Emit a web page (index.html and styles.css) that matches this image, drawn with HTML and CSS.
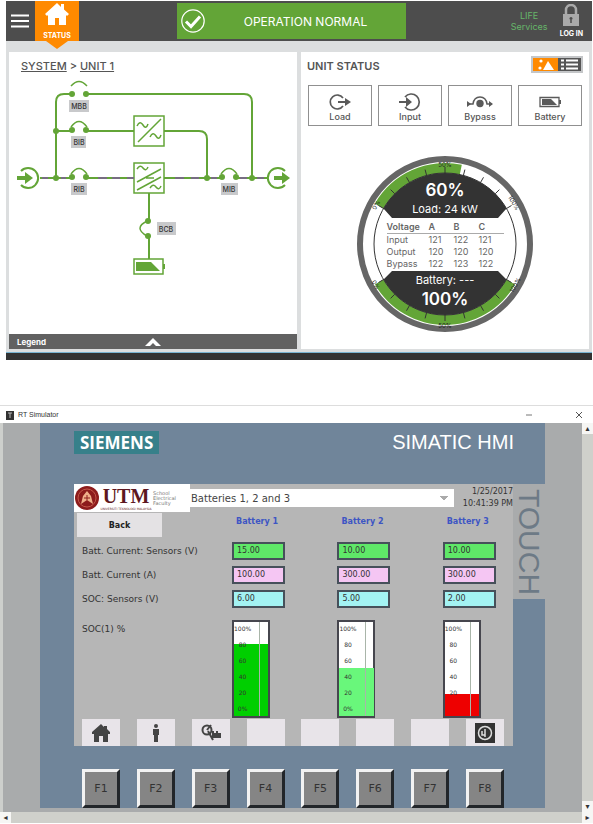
FILE: index.html
```html
<!DOCTYPE html>
<html lang="en">
<head>
  <meta charset="UTF-8">
  <meta name="viewport" content="width=device-width, initial-scale=1.0">
  <title>Unit Status</title>
  <link rel="stylesheet" href="styles.css">
</head>
<body>
  <!-- UPS display -->
  <section class="ups">
    <header class="topbar">
      <button class="menu-btn" aria-label="Menu">
        <svg width="18" height="14" viewBox="0 0 18 14"><path d="M0 1.500h18M0 7h18M0 12.500h18" stroke="#fff" stroke-width="2"/></svg>
      </button>
      <button class="status-btn">
        <svg width="24" height="22" viewBox="0 0 24 22"><path d="M12 0 0 11l2 2 1-1v10h7v-7h4v7h7V12l1 1 2-2-5-4.500V1h-3v3z" fill="#fff"/></svg>
        <span>STATUS</span>
      </button>
      <div class="banner">
        <svg width="24" height="24" viewBox="0 0 24 24"><circle cx="12" cy="12" r="11.200" fill="none" stroke="#fff" stroke-width="1.200"/><path d="M5 12.500l5 5 9-10" fill="none" stroke="#fff" stroke-width="3"/></svg>
        <span>OPERATION NORMAL</span>
      </div>
      <div class="life">LIFE<br>Services</div>
      <button class="login-btn">
        <svg width="18" height="22" viewBox="0 0 18 22"><path d="M4 11V6a5 5 0 0 1 10 0v5" fill="none" stroke="#aaa" stroke-width="2.500"/><rect x="1" y="10" width="16" height="12" fill="#aaa"/><path d="M9 13v6M7.500 14.500h3" stroke="#4d4d4d" stroke-width="1.500"/></svg>
        <span>LOG IN</span>
      </button>
    </header>

    <main class="panels">
      <div class="card">
        <nav class="crumbs"><a href="#">SYSTEM</a> &gt; <a href="#">UNIT 1</a></nav>
        <svg class="diagram" viewBox="9 75 288 259">
          <g fill="none" stroke="#63a537" stroke-width="2">
            <path d="M56 178V102q0-8 8-8h8M86 94h158q8 0 8 8v76"/>
            <path d="M56 131h16M86 131h48M164 131h35q8 0 8 8v39"/>
            <path d="M40 178h32M86 178h48M164 178h58M236 178h31"/>
            <path d="M149 193v28M149 236v23"/>
            <g stroke-width="1.500">
              <path d="M71 86q8-9 16 0M71 127q8-11 16 0M71 174q8-11 16 0M221 174q8-11 16 0M147 221q-14 7 0 15"/>
              <rect x="134" y="116" width="30" height="30"/>
              <rect x="134" y="163" width="30" height="30"/>
              <path d="M138 142l23-23M137 182l24-13M137 190l24-13M146 178h8"/>
              <path d="M137 126q3-6 6-1t5-1M150 137q3-6 6-1t5-1M137 169q3-5 6-1t5-1M150 188q3-5 6-1t5-1"/>
            </g>
            <path d="M21 171a10 10 0 1 1 0 14M285 171a10 10 0 1 0 0 14"/>
            <rect x="134" y="259" width="29" height="15" stroke-width="1.500"/>
          </g>
          <path d="M98 178h9M112 178h8M127 178h7M175 178h9M191 178h8M42 178h6M61 178h5M211 178h6M240 178h7M257 178h7" stroke="#776d82" stroke-width="1.800"/>
          <g fill="#63a537">
            <path d="M17 176h8v-4l8 6-8 6v-4h-8zM274 176h8v-4l8 6-8 6v-4h-8z"/>
            <path d="M136 262h15l9 9h-24zM163 264h2v5h-2z"/>
            <circle cx="72" cy="94" r="3"/><circle cx="86" cy="94" r="3"/>
            <circle cx="56" cy="131" r="3"/><circle cx="72" cy="130" r="3"/><circle cx="86" cy="130" r="3"/>
            <circle cx="56" cy="178" r="3"/><circle cx="72" cy="177" r="3"/><circle cx="86" cy="177" r="3"/>
            <circle cx="207" cy="178" r="3"/><circle cx="222" cy="177" r="3"/><circle cx="236" cy="177" r="3"/>
            <circle cx="252" cy="178" r="3"/><circle cx="148" cy="221" r="3"/><circle cx="148" cy="236" r="3"/>
          </g>
          <g fill="#c8c9cb">
            <rect x="69" y="100" width="20" height="12"/><rect x="71" y="136" width="15" height="12"/>
            <rect x="71" y="183" width="16" height="12"/><rect x="221" y="183" width="17" height="12"/>
            <rect x="157" y="222" width="19" height="13"/>
          </g>
          <g class="tags">
            <text x="79" y="109">MBB</text><text x="79" y="145">BIB</text><text x="79" y="192">RIB</text>
            <text x="229" y="192">MIB</text><text x="166" y="232">BCB</text>
          </g>
        </svg>
        <button class="legend">
          <span>Legend</span>
          <svg width="16" height="8" viewBox="0 0 16 8"><path d="M0 8 8 0l8 8h-5L8 5 5 8z" fill="#fff"/></svg>
        </button>
      </div>

      <div class="card">
        <div class="card-head">
          <h2>UNIT STATUS</h2>
          <button class="view-toggle" aria-label="Change view">
            <svg width="48" height="13" viewBox="0 0 48 13"><path fill="#ff8a00" d="M0 0h25v13H0z"/><path fill="#555" d="M25 0h23v13H25z"/><path d="M10 12l5-9 6 9z" fill="#fff"/><circle cx="8" cy="3" r="1.600" fill="#fff"/><circle cx="7" cy="10" r="1.600" fill="#fff"/><path d="M28 2.500h3M33 2.500h12M28 6.500h3M33 6.500h12M28 10.500h3M33 10.500h12" stroke="#fff" stroke-width="2"/></svg>
          </button>
        </div>
        <div class="tiles">
          <button class="tile">
            <svg width="24" height="18" viewBox="0 0 24 18"><path d="M15 5a7 7 0 1 0 0 8" fill="none" stroke="#5a5a5a" stroke-width="1.700"/><path d="M10 8h7V5l6 4-6 4v-3h-7z" fill="#5a5a5a"/></svg>
            <span>Load</span>
          </button>
          <button class="tile">
            <svg width="24" height="18" viewBox="0 0 24 18"><path d="M7 4a8 8 0 1 1 0 10" fill="none" stroke="#5a5a5a" stroke-width="1.700"/><path d="M1 8h7V4l6 5-6 5v-4H1z" fill="#5a5a5a"/></svg>
            <span>Input</span>
          </button>
          <button class="tile">
            <svg width="28" height="18" viewBox="0 0 28 18"><path d="M2 11h5q1-7 7-7t7 7h5" fill="none" stroke="#5a5a5a" stroke-width="1.500"/><circle cx="14" cy="10.500" r="3.700" fill="#5a5a5a"/><path d="M1 8l4 3-4 3zM23 8l4 3-4 3z" fill="#5a5a5a"/></svg>
            <span>Bypass</span>
          </button>
          <button class="tile">
            <svg width="24" height="18" viewBox="0 0 24 18"><path d="M2 4.500h19v9H2z" fill="none" stroke="#5a5a5a" stroke-width="1.300"/><path d="M4 6h9l6 6H4z" fill="#5a5a5a"/><path d="M21 7h2v4h-2z" fill="#5a5a5a"/></svg>
            <span>Battery</span>
          </button>
        </div>

        <div class="gauge">
          <svg class="dial" viewBox="-88 -88 176 176">
            <circle r="85" fill="#fff" stroke="#666" stroke-width="6"/>
            <path d="M-70.100-40.500A81 81 0 0 1 16.800-79.200L14.800-69.400A71 71 0 0 0-61.500-35.500z" fill="#63a537"/>
            <path d="M-70.100 40.500A81 81 0 0 0 70.100 40.500L61.500 35.500A71 71 0 0 1-61.500 35.500z" fill="#63a537"/>
            <circle r="71" fill="none" stroke="#333"/>
            <path d="M-61.500-35.500A71 71 0 0 1 61.500-35.500L53-26H-53zM-61.500 35.500A71 71 0 0 0 61.500 35.500L53 27H-53z" fill="#333"/>
            <g stroke="#333" stroke-width="1">
              <path d="M0-71v-6M18.400-68.600l1.500-5.800M35.500-61.500l3-5.200M50.200-50.200l4.200-4.200M-18.400-68.600l-1.500-5.800M-35.500-61.500l-3-5.200M-50.200-50.200l-4.200-4.200M61.500-35.500l5-3M-61.500-35.500l-5-3"/>
              <path d="M0 71v6M18.400 68.600l1.500 5.800M35.500 61.500l3 5.200M50.200 50.200l4.200 4.200M-18.400 68.600l-1.500 5.800M-35.500 61.500l-3 5.200M-50.200 50.200l-4.200 4.200M61.500 35.500l5 3M-61.500 35.500l-5 3"/>
            </g>
            <g class="ticks">
              <text y="-77">50%</text><text y="84">50%</text>
              <text transform="translate(-67 -38) rotate(-60)">0%</text>
              <text transform="translate(67 -40) rotate(60)">100%</text>
              <text transform="translate(-71 42) rotate(60)">0%</text>
              <text transform="translate(72 42) rotate(-60)">100%</text>
            </g>
          </svg>
          <div class="readout">
            <strong>60%</strong>
            <span>Load: 24 kW</span>
            <table class="volts">
              <thead><tr><th>Voltage</th><th>A</th><th>B</th><th>C</th></tr></thead>
              <tbody>
                <tr><td>Input</td><td>121</td><td>122</td><td>121</td></tr>
                <tr><td>Output</td><td>120</td><td>120</td><td>120</td></tr>
                <tr><td>Bypass</td><td>122</td><td>123</td><td>122</td></tr>
              </tbody>
            </table>
            <span>Battery: ---</span>
            <strong>100%</strong>
          </div>
        </div>
      </div>
    </main>
  </section>

  <!-- Simulator window -->
  <section class="window">
    <header class="titlebar">
      <svg width="8" height="10" viewBox="0 0 8 10"><path d="M0 1h8v9H0z" fill="#333"/><path d="M2 3h4M4 3v5" stroke="#bbb"/></svg>
      <h1>RT Simulator</h1>
      <button aria-label="Minimize"><svg width="8" height="8" viewBox="0 0 8 8"><path d="M1 4h6" stroke="#777"/></svg></button>
      <button aria-label="Close"><svg width="8" height="8" viewBox="0 0 8 8"><path d="M1 1l6 6M7 1 1 7" stroke="#555"/></svg></button>
    </header>
    <div class="viewport">
      <div class="bezel">
        <div class="brand">
          <span class="siemens">SIEMENS</span>
          <span class="simatic">SIMATIC HMI</span>
        </div>
        <div class="middle">
          <div class="screen">
            <div class="screen-head">
              <div class="logo">
                <svg width="24" height="24" viewBox="0 0 24 24"><circle cx="12" cy="12" r="12" fill="#8d1c1c"/><circle cx="12" cy="12" r="9" fill="none" stroke="#c4574a"/><path d="M6 18l2-8 4-5 4 5 2 8-6-4z" fill="#f0b08a"/><path d="M9 12h6M12 9v5" stroke="#8d1c1c"/></svg>
                <div class="utm"><b>UTM</b><small>UNIVERSITI TEKNOLOGI MALAYSIA</small></div>
                <div class="faculty">School<br>Electrical<br>Faculty</div>
              </div>
              <select class="page-select" aria-label="Page"><option>Batteries 1, 2 and 3</option></select>
              <div class="clock">1/25/2017<br>10:41:39 PM</div>
            </div>
            <table class="readings">
              <thead>
                <tr><th><button class="back">Back</button></th><th>Battery 1</th><th>Battery 2</th><th>Battery 3</th></tr>
              </thead>
              <tbody>
                <tr><th>Batt. Current: Sensors (V)</th><td><output class="green">15.00</output></td><td><output class="green">10.00</output></td><td><output class="green">10.00</output></td></tr>
                <tr><th>Batt. Current (A)</th><td><output class="pink">100.00</output></td><td><output class="pink">300.00</output></td><td><output class="pink">300.00</output></td></tr>
                <tr><th>SOC: Sensors (V)</th><td><output class="cyan">6.00</output></td><td><output class="cyan">5.00</output></td><td><output class="cyan">2.00</output></td></tr>
                <tr class="soc">
                  <th>SOC(1) %</th>
                  <td><div class="tank"><div class="level full" style="height: 77%"></div><ol><li>100%</li><li>80</li><li>60</li><li>40</li><li>20</li><li>0%</li></ol></div></td>
                  <td><div class="tank"><div class="level half" style="height: 51%"></div><ol><li>100%</li><li>80</li><li>60</li><li>40</li><li>20</li><li>0%</li></ol></div></td>
                  <td><div class="tank"><div class="level low" style="height: 23%"></div><ol><li>100%</li><li>80</li><li>60</li><li>40</li><li>20</li><li></li></ol></div></td>
                </tr>
              </tbody>
            </table>
            <div class="softkeys">
              <button aria-label="Home"><svg width="20" height="20" viewBox="0 0 20 20"><path d="M10 1 1 9v2h2v8h5v-6h4v6h5v-8h2V9l-3-3V3h-3v1z" fill="#444"/></svg></button>
              <button aria-label="User"><svg width="20" height="20" viewBox="0 0 20 20"><circle cx="10" cy="3" r="2" fill="#444"/><path d="M7 6h6v6h-1v7H8v-7H7z" fill="#444"/></svg></button>
              <button aria-label="Settings"><svg width="20" height="20" viewBox="0 0 20 20"><circle cx="6" cy="7" r="4.500" fill="none" stroke="#444" stroke-width="2"/><path d="M6 7l4-5M7 8l5 9" stroke="#444" stroke-width="2"/><path d="M11 8h2v2h2V8h2v2h3v5h-9z" fill="#444"/></svg></button>
              <button aria-label="Key 4"></button>
              <button aria-label="Key 5"></button>
              <button aria-label="Key 6"></button>
              <button aria-label="Key 7"></button>
              <button aria-label="Power"><svg width="20" height="20" viewBox="0 0 20 20"><path d="M0 0h20v20H0z" fill="#333"/><circle cx="10" cy="10" r="6.500" fill="none" stroke="#ddd" stroke-width="1.500"/><path d="M10 6v8M7 8v4h3" fill="none" stroke="#ddd" stroke-width="1.500"/></svg></button>
            </div>
          </div>
          <div class="touch">TOUCH</div>
        </div>
        <div class="fkeys">
          <button>F1</button><button>F2</button><button>F3</button><button>F4</button>
          <button>F5</button><button>F6</button><button>F7</button><button>F8</button>
        </div>
      </div>
      <div class="vscroll"><span>▴</span><span>▾</span></div>
    </div>
    <div class="hscroll"><span>◂</span><span>▸</span></div>
  </section>
</body>
</html>
```
FILE: styles.css
```css
* {
  box-sizing: border-box;
}
body {
  margin: 0;
  background: #fff;
  font-family: Inter, "Liberation Sans", sans-serif;
  color: #555;
}
button {
  font: inherit;
  color: inherit;
  border: 0;
  padding: 0;
  background: none;
}
svg {
  display: block;
}

/* UPS display */
.ups {
  margin: 1px 1px 0 6px;
  background: #dcdedf;
  border-bottom: 7px solid #333;
}
.topbar {
  display: flex;
  height: 40px;
  background: #4d4d4d;
  color: #fff;
}
.menu-btn {
  padding: 0 6px 0 5px;
}
.status-btn {
  width: 44px;
  height: 48px;
  padding: 2px 0 9px;
  background: #ff8a00;
  clip-path: polygon(0 0, 100% 0, 100% 40px, 75% 40px, 50% 100%, 25% 40px, 0 40px);
  font-size: 7px;
  font-weight: bold;
  display: flex;
  flex-direction: column;
  align-items: center;
  justify-content: space-between;
}
.banner {
  display: flex;
  flex: 0 1 229px;
  align-items: center;
  margin: 2px 0 2px 98px;
  padding-left: 4px;
  background: #63a537;
  font-size: 12px;
}
.banner span {
  flex: 1;
  text-align: center;
}
.life {
  margin-left: auto;
  padding-top: 9px;
  font-size: 9px;
  line-height: 11px;
  text-align: center;
  color: #66b56a;
}
.login-btn {
  display: flex;
  flex-direction: column;
  align-items: center;
  justify-content: space-between;
  margin: 3px 9px 3px 12px;
  font-size: 7px;
  font-weight: bold;
}
.panels {
  display: grid;
  grid-template-columns: 1fr 1fr;
  gap: 4px;
  padding: 11px 3px 3px;
  border-bottom: 1px solid #79b4d2;
}
.card {
  display: flex;
  flex-direction: column;
  background: #fff;
}
.crumbs {
  padding: 6px 12px 0;
  height: 23px;
  font-size: 11px;
  line-height: 16px;
  font-weight: 500;
}
.crumbs a {
  color: inherit;
}
.diagram {
  width: 100%;
  flex: 1;
}
.tags {
  font-size: 7px;
  font-weight: 500;
  text-anchor: middle;
  fill: #333;
}
.legend {
  display: grid;
  grid-template-columns: 1fr auto 1fr;
  align-items: center;
  height: 15px;
  padding: 0 8px;
  background: #616161;
  color: #fff;
  font-size: 8px;
  font-weight: bold;
  text-align: left;
}
.card-head {
  display: flex;
  justify-content: space-between;
  padding: 4px 6px 0;
}
.card-head h2 {
  margin: 0;
  font-size: 11px;
  line-height: 20px;
  font-weight: 600;
}
.view-toggle {
  height: 17px;
  border: 2px solid #c4c6c8;
}
.tiles {
  display: grid;
  grid-template-columns: repeat(4, 1fr);
  gap: 6px;
  padding: 9px 7px 0;
}
.tile {
  display: flex;
  flex-direction: column;
  align-items: center;
  height: 41px;
  padding-top: 7px;
  border: 1px solid #909090;
  font-size: 9px;
  line-height: 11px;
  font-weight: 500;
}
.gauge {
  display: grid;
  justify-content: center;
  margin-top: 30px;
  padding-bottom: 17px;
}
.dial,
.readout {
  grid-area: 1 / 1;
  width: 176px;
  height: 176px;
}
.ticks {
  font-size: 6px;
  text-anchor: middle;
  fill: #222;
}
.readout {
  display: flex;
  flex-direction: column;
  align-items: center;
  z-index: 1;
  padding-top: 24px;
  color: #fff;
  font-size: 11px;
}
.readout strong {
  font-size: 17px;
  line-height: 20px;
  font-weight: 600;
}
.readout span {
  line-height: 18px;
}
.volts {
  border-collapse: collapse;
  table-layout: fixed;
  width: 112px;
  margin: 3px 0 1px;
  color: #666;
  font-size: 9px;
  line-height: 12px;
  text-align: left;
}
.volts th,
.volts td {
  padding: 0;
  width: 25px;
}
.volts th:first-child {
  width: 42px;
}
.volts th {
  border-bottom: 1px solid #aaa;
  font-weight: 600;
}

/* Simulator window */
.window {
  margin-top: 45px;
  border-top: 1px solid #ddd;
  font-family: "DejaVu Sans", sans-serif;
  color: #333;
}
.titlebar {
  display: flex;
  align-items: center;
  gap: 4px;
  height: 17px;
  padding: 0 10px 0 6px;
  background: #fff;
}
.titlebar h1 {
  flex: 1;
  margin: 0;
  font: 7px "Liberation Sans", sans-serif;
}
.titlebar button + button {
  margin-left: 38px;
}
.viewport {
  display: flex;
  border-left: 3px solid #cdcfcc;
  background: #a9abac;
}
.bezel {
  flex: 1;
  min-width: 0;
  margin: 0 37px 4px;
  padding-left: 34px;
  background: #70859a;
}
.brand {
  display: flex;
  justify-content: space-between;
  padding: 8px 31px 30px 0;
  color: #fff;
  font-family: "Liberation Sans", sans-serif;
}
.siemens {
  padding: 0 6px;
  background: #37808a;
  font: bold 17px/23px "Open Sans", sans-serif;
}
.simatic {
  font-size: 20px;
  line-height: 23px;
}
.middle {
  display: flex;
  align-items: flex-start;
}
.screen {
  flex: 1;
  min-width: 0;
  background: #b6b6b6;
}
.screen-head {
  display: flex;
  align-items: flex-start;
  height: 28px;
}
.logo {
  display: flex;
  align-items: center;
  gap: 2px;
  flex: 0 0 116px;
  height: 28px;
  padding-left: 1px;
  background: #fff;
}
.utm {
  display: flex;
  flex-direction: column;
  align-items: center;
  width: 50px;
  color: #5d1720;
}
.utm b {
  font: bold 20px/22px "Liberation Serif", serif;
}
.utm small {
  font-size: 3px;
  line-height: 4px;
  white-space: nowrap;
}
.faculty {
  font-size: 5px;
  line-height: 5px;
  color: #777;
}
.page-select {
  flex: 1;
  min-width: 0;
  height: 18px;
  margin-top: 5px;
  padding: 0 16px 0 1px;
  border: 0;
  border-radius: 0;
  appearance: none;
  background-color: #fff;
  background-image: linear-gradient(45deg, transparent 50%, #aaa 50%), linear-gradient(-45deg, transparent 50%, #aaa 50%);
  background-position: right 10px center, right 6px center;
  background-repeat: no-repeat;
  background-size: 4px 4px;
  color: #444;
  font: 10px "DejaVu Sans", sans-serif;
}
.clock {
  width: 59px;
  padding-top: 2px;
  font-size: 8px;
  line-height: 12px;
  text-align: right;
  white-space: nowrap;
}
.readings {
  width: 100%;
  border-collapse: collapse;
  table-layout: fixed;
  font-size: 8px;
}
.readings th,
.readings td {
  height: 24px;
  padding: 0;
  text-align: left;
}
.readings thead th {
  width: 24%;
  height: 27px;
  padding: 0 0 9px 4px;
  color: #3d55c4;
}
.readings thead th:first-child {
  width: 36%;
  padding: 1px 0 2px 3px;
}
.readings thead th:last-child {
  width: 16%;
}
.readings tbody th {
  padding-left: 8px;
  font-size: 9px;
  font-weight: normal;
  white-space: nowrap;
}
.back {
  display: block;
  width: 85px;
  height: 24px;
  background: #e4e2e4;
  color: #222;
}
.readings output {
  display: block;
  width: 53px;
  height: 18px;
  padding-left: 3px;
  border: 2px solid #46505a;
  line-height: 14px;
}
.green {
  background: #5fe868;
}
.pink {
  background: #f5c6f3;
}
.cyan {
  background: #a3f3f3;
}
.readings .soc th,
.readings .soc td {
  height: 108px;
  padding-top: 9px;
  vertical-align: top;
}
.readings .soc th {
  padding-top: 13px;
}
.tank {
  display: grid;
  align-items: end;
  width: 38px;
  height: 98px;
  border: 2px solid #46464e;
  background: #fff;
}
.tank > * {
  grid-area: 1 / 1;
}
.full {
  background: #00cf00;
}
.half {
  background: #69f77b;
}
.low {
  background: #ee0000;
}
.tank ol {
  display: flex;
  flex-direction: column;
  justify-content: space-between;
  height: 94px;
  margin: 0 8px 0 0;
  padding: 3px 8px 3px 0;
  border-right: 1px solid #a9b5a9;
  list-style: none;
  font-size: 6px;
  line-height: 8px;
  text-align: center;
}
.tank li {
  height: 8px;
}
.softkeys,
.fkeys {
  display: grid;
  grid-template-columns: repeat(8, 38px);
  justify-content: space-between;
  padding: 0 9px 0 8px;
}
.softkeys button {
  display: grid;
  place-items: center;
  height: 27px;
  background: #e8e4e9;
}
.touch {
  flex: 0 0 32px;
  height: 115px;
  padding-top: 5px;
  background: #a9abac;
  color: #6d7a86;
  font: 30px/32px "Liberation Sans", sans-serif;
  writing-mode: vertical-rl;
}
.fkeys {
  margin-right: 32px;
  padding-top: 23px;
}
.fkeys button {
  height: 39px;
  border: 3px solid;
  border-color: #f2f2f2 #22262a #22262a #f2f2f2;
  background: #858585;
  color: #333;
  font-size: 11px;
}
.vscroll,
.hscroll {
  display: flex;
  justify-content: space-between;
  background: #cfd0cb;
  font-size: 8px;
  line-height: 11px;
  text-align: center;
}
.vscroll {
  flex: 0 0 11px;
  flex-direction: column;
}
.vscroll span,
.hscroll span {
  min-width: 11px;
  background: #f6f6f4;
}
.hscroll {
  height: 11px;
}
```
